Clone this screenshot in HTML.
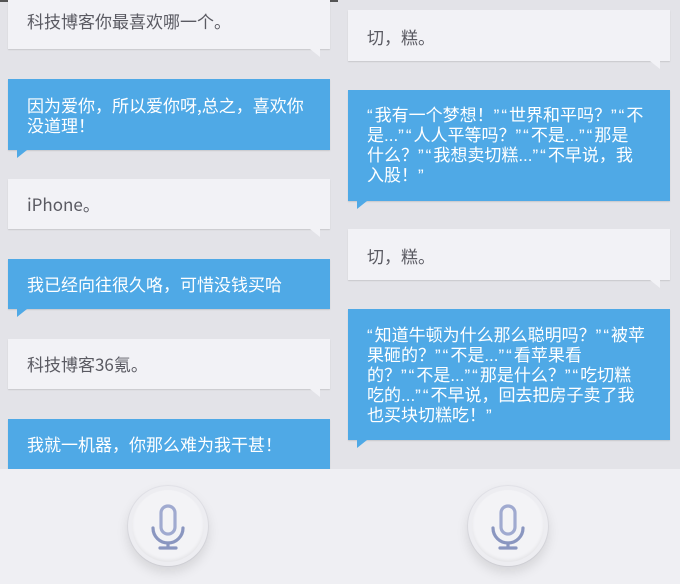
<!DOCTYPE html>
<html><head><meta charset="utf-8"><style>
*{margin:0;padding:0;box-sizing:border-box}
body{width:680px;height:584px;overflow:hidden;background:#e3e3e8;position:relative;font-family:"Liberation Sans","Noto Sans CJK SC",sans-serif}
.b{position:absolute;font-size:17px;line-height:20px;padding:0 13px 0 19px;box-shadow:0 1px 1px rgba(0,0,0,.12);font-family:"Noto Sans CJK SC",sans-serif;white-space:nowrap}
.q{font-family:"Liberation Sans","Noto Sans CJK SC",sans-serif}
.q i{font-style:normal;font-family:"Liberation Sans",sans-serif;letter-spacing:2px}
.w{background:#f2f2f6;color:#5a5a62}
.u{background:#4fa9e6;color:#fff}
.t{position:absolute;width:0;height:0}
.tw{border-left:10px solid transparent;border-top:8px solid #f2f2f6}
.tu{border-right:10px solid transparent;border-top:8px solid #4fa9e6}
.bot{position:absolute;top:469px;height:115px;background:#efeff3;width:680px;left:0}
.mic{position:absolute;width:80px;height:80px;border-radius:50%;background:#ededf1;box-shadow:0 6px 12px rgba(0,0,0,.12),0 0 0 1px #e4e4ea}
.mic .in{position:absolute;left:4px;top:4px;width:72px;height:72px;border-radius:50%;background:#f3f3f6;box-shadow:inset 0 -2px 3px rgba(0,0,0,.06)}
.mic svg{position:absolute;left:22px;top:18px}
</style></head><body>
<div style="position:absolute;left:0;top:0;width:338px;height:2px;background:#555"></div>

<div class="b w" style="left:8px;top:0;width:322px;height:49px;padding-top:11px">科技博客你最喜欢哪一个。</div>
<div class="t tw" style="left:310px;top:49px"></div>
<div class="b u" style="left:8px;top:79px;width:322px;height:71px;padding-top:16px">因为爱你，所以爱你呀,总之，喜欢你<br>没道理！</div>
<div class="t tu" style="left:17px;top:150px"></div>
<div class="b w" style="left:8px;top:179px;width:322px;height:50px;padding-top:15px">iPhone。</div>
<div class="t tw" style="left:310px;top:229px"></div>
<div class="b u" style="left:8px;top:259px;width:322px;height:50px;padding-top:15px">我已经向往很久咯，可惜没钱买哈</div>
<div class="t tu" style="left:17px;top:309px"></div>
<div class="b w" style="left:8px;top:339px;width:322px;height:50px;padding-top:15px">科技博客36氪。</div>
<div class="t tw" style="left:310px;top:389px"></div>
<div class="b u" style="left:8px;top:419px;width:322px;height:50px;padding-top:15px">我就一机器，你那么难为我干甚！</div>

<div class="b w" style="left:348px;top:10px;width:322px;height:51px;padding-top:17px">切，糕。</div>
<div class="t tw" style="left:650px;top:61px"></div>
<div class="b u q" style="left:348px;top:90px;width:322px;height:111px;padding-top:16px"><i>“</i>我有一个梦想！<i>”“</i>世界和平吗？<i>”“</i>不<br>是...<i>”“</i>人人平等吗？<i>”“</i>不是...<i>”“</i>那是<br>什么？<i>”“</i>我想卖切糕...<i>”“</i>不早说，我<br>入股！<i>”</i></div>
<div class="t tu" style="left:357px;top:201px"></div>
<div class="b w" style="left:348px;top:229px;width:322px;height:51px;padding-top:17px">切，糕。</div>
<div class="t tw" style="left:650px;top:280px"></div>
<div class="b u q" style="left:348px;top:309px;width:322px;height:131px;padding-top:17px"><i>“</i>知道牛顿为什么那么聪明吗？<i>”“</i>被苹<br>果砸的？<i>”“</i>不是...<i>”“</i>看苹果看<br>的？<i>”“</i>不是...<i>”“</i>那是什么？<i>”“</i>吃切糕<br>吃的...<i>”“</i>不早说，回去把房子卖了我<br>也买块切糕吃！<i>”</i></div>
<div class="t tu" style="left:357px;top:440px"></div>

<div class="bot"></div>
<div class="mic" style="left:128px;top:486px"><div class="in"></div>
<svg width="36" height="46" viewBox="0 0 36 46"><g fill="none" stroke="#8a96c0" stroke-width="3.2" stroke-linecap="round"><rect x="11" y="2" width="14" height="28" rx="7" stroke="#a0aad0"/><path d="M3 24 a15 15 0 0 0 30 0"/><path d="M18 39v5M10 44h16"/></g></svg></div>
<div class="mic" style="left:468px;top:486px"><div class="in"></div>
<svg width="36" height="46" viewBox="0 0 36 46"><g fill="none" stroke="#8a96c0" stroke-width="3.2" stroke-linecap="round"><rect x="11" y="2" width="14" height="28" rx="7" stroke="#a0aad0"/><path d="M3 24 a15 15 0 0 0 30 0"/><path d="M18 39v5M10 44h16"/></g></svg></div>
</body></html>
